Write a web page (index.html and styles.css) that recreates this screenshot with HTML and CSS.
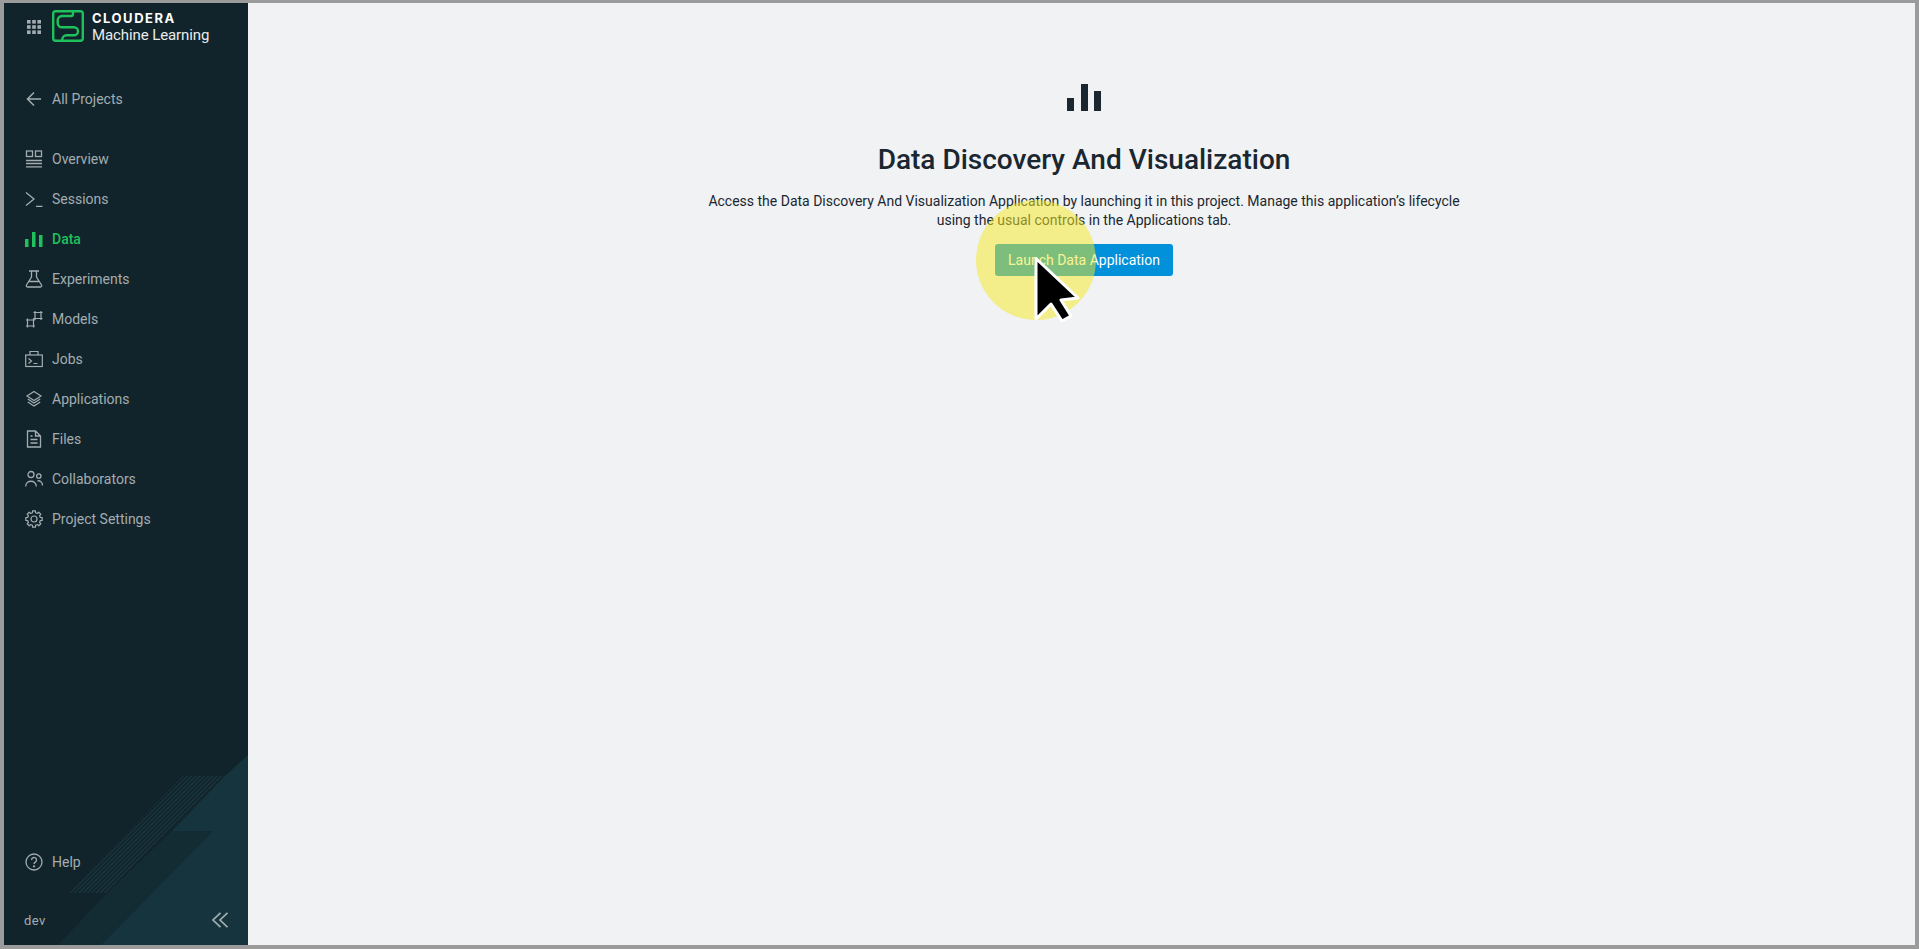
FILE: index.html
```html
<!DOCTYPE html>
<html lang="en">
  <head>
    <meta charset="UTF-8" />
    <title>Data Discovery And Visualization</title>
    <link rel="stylesheet" href="styles.css">
  </head>
  <body>
    <div class="frame">
      <aside class="sidebar">
        <svg class="sidebar-art" width="244" height="190" viewBox="0 0 244 190">
          <defs>
            <pattern id="stripes" width="3" height="3" patternUnits="userSpaceOnUse" patternTransform="rotate(45)">
              <rect width="3" height="3" fill="#11242b" />
              <rect width="1" height="3" fill="#1c3a43" />
            </pattern>
          </defs>
          <polygon points="64,138 103,138 221,21 179,21" fill="url(#stripes)" />
          <polygon points="54,190 103,138 168,76 209,76 97,190" fill="#132b32" />
          <polygon points="244,0 244,190 97,190 209,76 168,76 221,21" fill="#15343e" />
        </svg>

        <div class="brand">
          <svg class="icon-grid" width="16" height="16" viewBox="0 0 16 16">
            <g fill="#a3adb1">
              <rect x="1" y="1" width="3.6" height="3.6" /><rect x="6.2" y="1" width="3.6" height="3.6" /><rect x="11.4" y="1" width="3.6" height="3.6" />
              <rect x="1" y="6.2" width="3.6" height="3.6" /><rect x="6.2" y="6.2" width="3.6" height="3.6" /><rect x="11.4" y="6.2" width="3.6" height="3.6" />
              <rect x="1" y="11.4" width="3.6" height="3.6" /><rect x="6.2" y="11.4" width="3.6" height="3.6" /><rect x="11.4" y="11.4" width="3.6" height="3.6" />
            </g>
          </svg>
          <svg class="logo" width="32" height="32" viewBox="0 0 32 32" fill="none" stroke="#1fc15c" stroke-width="2.4">
            <rect x="1.2" y="1.2" width="29.6" height="29.6" rx="2.5" />
            <path d="M21 1.500V4a2 2 0 0 1-2 2H10a4.300 4.300 0 0 0-4.300 4.300V13a4.300 4.300 0 0 0 4.300 4.300h12a4 4 0 0 1 0 8h-7.500a4.200 4.200 0 0 0-4.200 4.200V31" />
          </svg>
          <div class="brand-text">
            <div class="brand-name">CLOUDERA</div>
            <div class="brand-product">Machine Learning</div>
          </div>
        </div>

        <a class="nav-item back">
          <svg width="18" height="18" viewBox="0 0 18 18" fill="none" stroke="currentColor" stroke-width="1.500"><path d="M16 9H2.500M9 2.500 2.500 9 9 15.500" /></svg>
          <span>All Projects</span>
        </a>

        <nav class="nav">
          <a class="nav-item">
            <svg width="18" height="18" viewBox="0 0 18 18" fill="none" stroke="currentColor" stroke-width="1.300"><rect x="1.500" y="1" width="6" height="5.500" /><rect x="10.500" y="1" width="6" height="5.500" /><path d="M1 10.500h16M1 13.500h16M1 16.800h16" /></svg>
            <span>Overview</span>
          </a>
          <a class="nav-item">
            <svg width="18" height="18" viewBox="0 0 18 18" fill="none" stroke="currentColor" stroke-width="1.300"><path d="M1 2.500 9 9 1 15.500M11 16.300h6.500" /></svg>
            <span>Sessions</span>
          </a>
          <a class="nav-item active">
            <svg width="18" height="18" viewBox="0 0 18 18" fill="currentColor"><rect x="0" y="9" width="3.500" height="8" /><rect x="7" y="2" width="3.500" height="15" /><rect x="14" y="5" width="3.500" height="12" /></svg>
            <span>Data</span>
          </a>
          <a class="nav-item">
            <svg width="18" height="18" viewBox="0 0 18 18" fill="none" stroke="currentColor" stroke-width="1.300"><path d="M4 1h10M6.500 1v6L1.500 15a1.300 1.300 0 0 0 1 2h13a1.300 1.300 0 0 0 1-2l-5-8V1M4.500 11.500h9" /></svg>
            <span>Experiments</span>
          </a>
          <a class="nav-item">
            <svg width="18" height="18" viewBox="0 0 18 18" fill="none" stroke="currentColor" stroke-width="1.200"><path d="M1 10h9M1 16h9M2.500 8.500v9M8.500 8.500v9M8.500 2.500h9M8.500 8.500h9M10 1v9M16 1v9" /></svg>
            <span>Models</span>
          </a>
          <a class="nav-item">
            <svg width="18" height="18" viewBox="0 0 18 18" fill="none" stroke="currentColor" stroke-width="1.200"><rect x=".7" y="5" width="16.600" height="11.500" /><path d="M5 5V1.500h8V5M3.500 8.500 6.500 11l-3 2.500M8.500 13.500h4" /></svg>
            <span>Jobs</span>
          </a>
          <a class="nav-item">
            <svg width="18" height="18" viewBox="0 0 18 18" fill="none" stroke="currentColor" stroke-width="1.200"><path d="M9 1.500 16 6l-7 4.500L2 6z" /><path d="M2.800 9 9 13l6.200-4M2.800 12 9 16l6.200-4" /></svg>
            <span>Applications</span>
          </a>
          <a class="nav-item">
            <svg width="18" height="18" viewBox="0 0 18 18" fill="none" stroke="currentColor" stroke-width="1.300"><path d="M2.500 1h8l5 5v11h-13zM10.500 1v5h5M5.500 6h2M5.500 9.500h7M5.500 13h7" /></svg>
            <span>Files</span>
          </a>
          <a class="nav-item">
            <svg width="18" height="18" viewBox="0 0 18 18" fill="none" stroke="currentColor" stroke-width="1.300"><circle cx="6" cy="4.500" r="3" /><circle cx="13.800" cy="6" r="2.200" /><path d="M.7 16.500c0-7 10.600-7 10.600 0M12.500 10.800c3-.5 5 1.800 5 4.800" /></svg>
            <span>Collaborators</span>
          </a>
          <a class="nav-item">
            <svg width="18" height="18" viewBox="0 0 18 18" fill="none" stroke="currentColor" stroke-width="1.200" stroke-linejoin="round"><circle cx="9" cy="9" r="3" /><polygon points="7.43,2.69 7.56,.83 10.44,.83 10.57,2.69 12.35,3.43 13.76,2.20 15.80,4.24 14.57,5.65 15.31,7.43 17.17,7.56 17.17,10.44 15.31,10.57 14.57,12.35 15.80,13.76 13.76,15.80 12.35,14.57 10.57,15.31 10.44,17.17 7.56,17.17 7.43,15.31 5.65,14.57 4.24,15.80 2.20,13.76 3.43,12.35 2.69,10.57 .83,10.44 .83,7.56 2.69,7.43 3.43,5.65 2.20,4.24 4.24,2.20 5.65,3.43" /></svg>
            <span>Project Settings</span>
          </a>
        </nav>

        <a class="nav-item help">
          <svg width="18" height="18" viewBox="0 0 18 18" fill="none" stroke="currentColor" stroke-width="1.300"><circle cx="9" cy="9" r="8" /><path d="M6.500 7a2.500 2.500 0 1 1 3.800 2.100c-.9.600-1.300 1-1.300 2" /><circle cx="9" cy="13.300" r=".5" /></svg>
          <span>Help</span>
        </a>

        <div class="sidebar-foot">
          <span class="env">dev</span>
          <svg width="16" height="16" viewBox="0 0 16 16" fill="none" stroke="#a3adb1" stroke-width="1.700"><path d="M8.500 .8 1 8l7.500 7.200M15.500 .8 8 8l7.500 7.200" /></svg>
        </div>
      </aside>

      <main class="main">
        <svg class="hero-icon" width="34" height="27" viewBox="0 0 34 27" fill="#1b2730"><rect x="0" y="14" width="7" height="13" /><rect x="14" y="0" width="7" height="27" /><rect x="27" y="7" width="7" height="20" /></svg>
        <h1>Data Discovery And Visualization</h1>
        <p>Access the Data Discovery And Visualization Application by launching it in this project. Manage this application’s lifecycle using the usual controls in the Applications tab.</p>
        <button type="button">Launch Data Application</button>
      </main>

      <div class="click-spot"></div>
      <svg class="cursor" width="46" height="66" viewBox="0 0 46 66">
        <path d="M2 1.500V62l15-15 11 17 9-5-10-16 17-2z" fill="#000" stroke="#fff" stroke-width="3" stroke-linejoin="round" />
      </svg>
    </div>
  </body>
</html>
```

FILE: styles.css
```css
* {
  box-sizing: border-box;
}
html,
body {
  height: 100%;
}
body {
  margin: 0;
  font-family: Roboto, "Liberation Sans", sans-serif;
  background-color: #9b9b9b;
}
.frame {
  position: relative;
  display: flex;
  height: 949px;
  padding: 3px 4px 4px 4px;
}
.sidebar {
  position: relative;
  flex: 0 0 244px;
  display: flex;
  flex-direction: column;
  background-color: #12242b;
  color: #a3adb1;
  overflow: hidden;
}
.sidebar-art {
  position: absolute;
  left: 0;
  bottom: 0;
}
.brand {
  position: relative;
  display: flex;
  align-items: flex-start;
  height: 41px;
  padding: 7px 0 0 22px;
}
.icon-grid {
  margin-top: 9px;
}
.logo {
  margin-left: 10px;
}
.brand-text {
  margin-left: 8px;
  color: #fff;
}
.brand-name {
  font-family: Inter, Roboto, sans-serif;
  font-size: 13px;
  font-weight: 700;
  letter-spacing: 1.500px;
  line-height: 16px;
}
.brand-product {
  font-size: 15px;
  line-height: 19px;
  letter-spacing: -0.1px;
  color: #e8ebec;
}
.nav-item {
  position: relative;
  display: flex;
  align-items: center;
  height: 40px;
  padding-left: 21px;
  font-size: 14px;
}
.nav-item svg {
  flex: none;
  margin-right: 9px;
}
.nav-item.active {
  color: #1fc15c;
  font-weight: 500;
}
.back {
  margin-top: 35px;
}
.nav {
  margin-top: 20px;
}
.help {
  margin-top: auto;
}
.sidebar-foot {
  position: relative;
  display: flex;
  align-items: center;
  justify-content: space-between;
  height: 50px;
  margin-top: 13px;
  padding: 0 20px 0 20px;
  font-size: 13px;
  letter-spacing: 0.4px;
}
.main {
  flex: 1;
  display: flex;
  flex-direction: column;
  align-items: center;
  padding-top: 81px;
  padding-left: 5px;
  background-color: #f0f2f4;
  color: #1b2730;
}
.hero-icon {
  display: block;
}
h1 {
  margin: 33px 0 0;
  font-size: 28px;
  font-weight: 500;
  line-height: 32px;
}
p {
  width: 780px;
  margin: 16px 0 0;
  font-size: 14px;
  line-height: 19px;
  text-align: center;
}
button {
  width: 178px;
  height: 32px;
  margin-top: 14px;
  padding: 0;
  border: none;
  border-radius: 3px;
  background-color: #0091da;
  color: #fff;
  font-family: inherit;
  font-size: 14px;
}
.click-spot {
  position: absolute;
  left: 976px;
  top: 200px;
  width: 120px;
  height: 120px;
  border-radius: 50%;
  background-color: rgba(245, 233, 36, 0.51);
}
.cursor {
  position: absolute;
  left: 1034px;
  top: 257px;
}
```
